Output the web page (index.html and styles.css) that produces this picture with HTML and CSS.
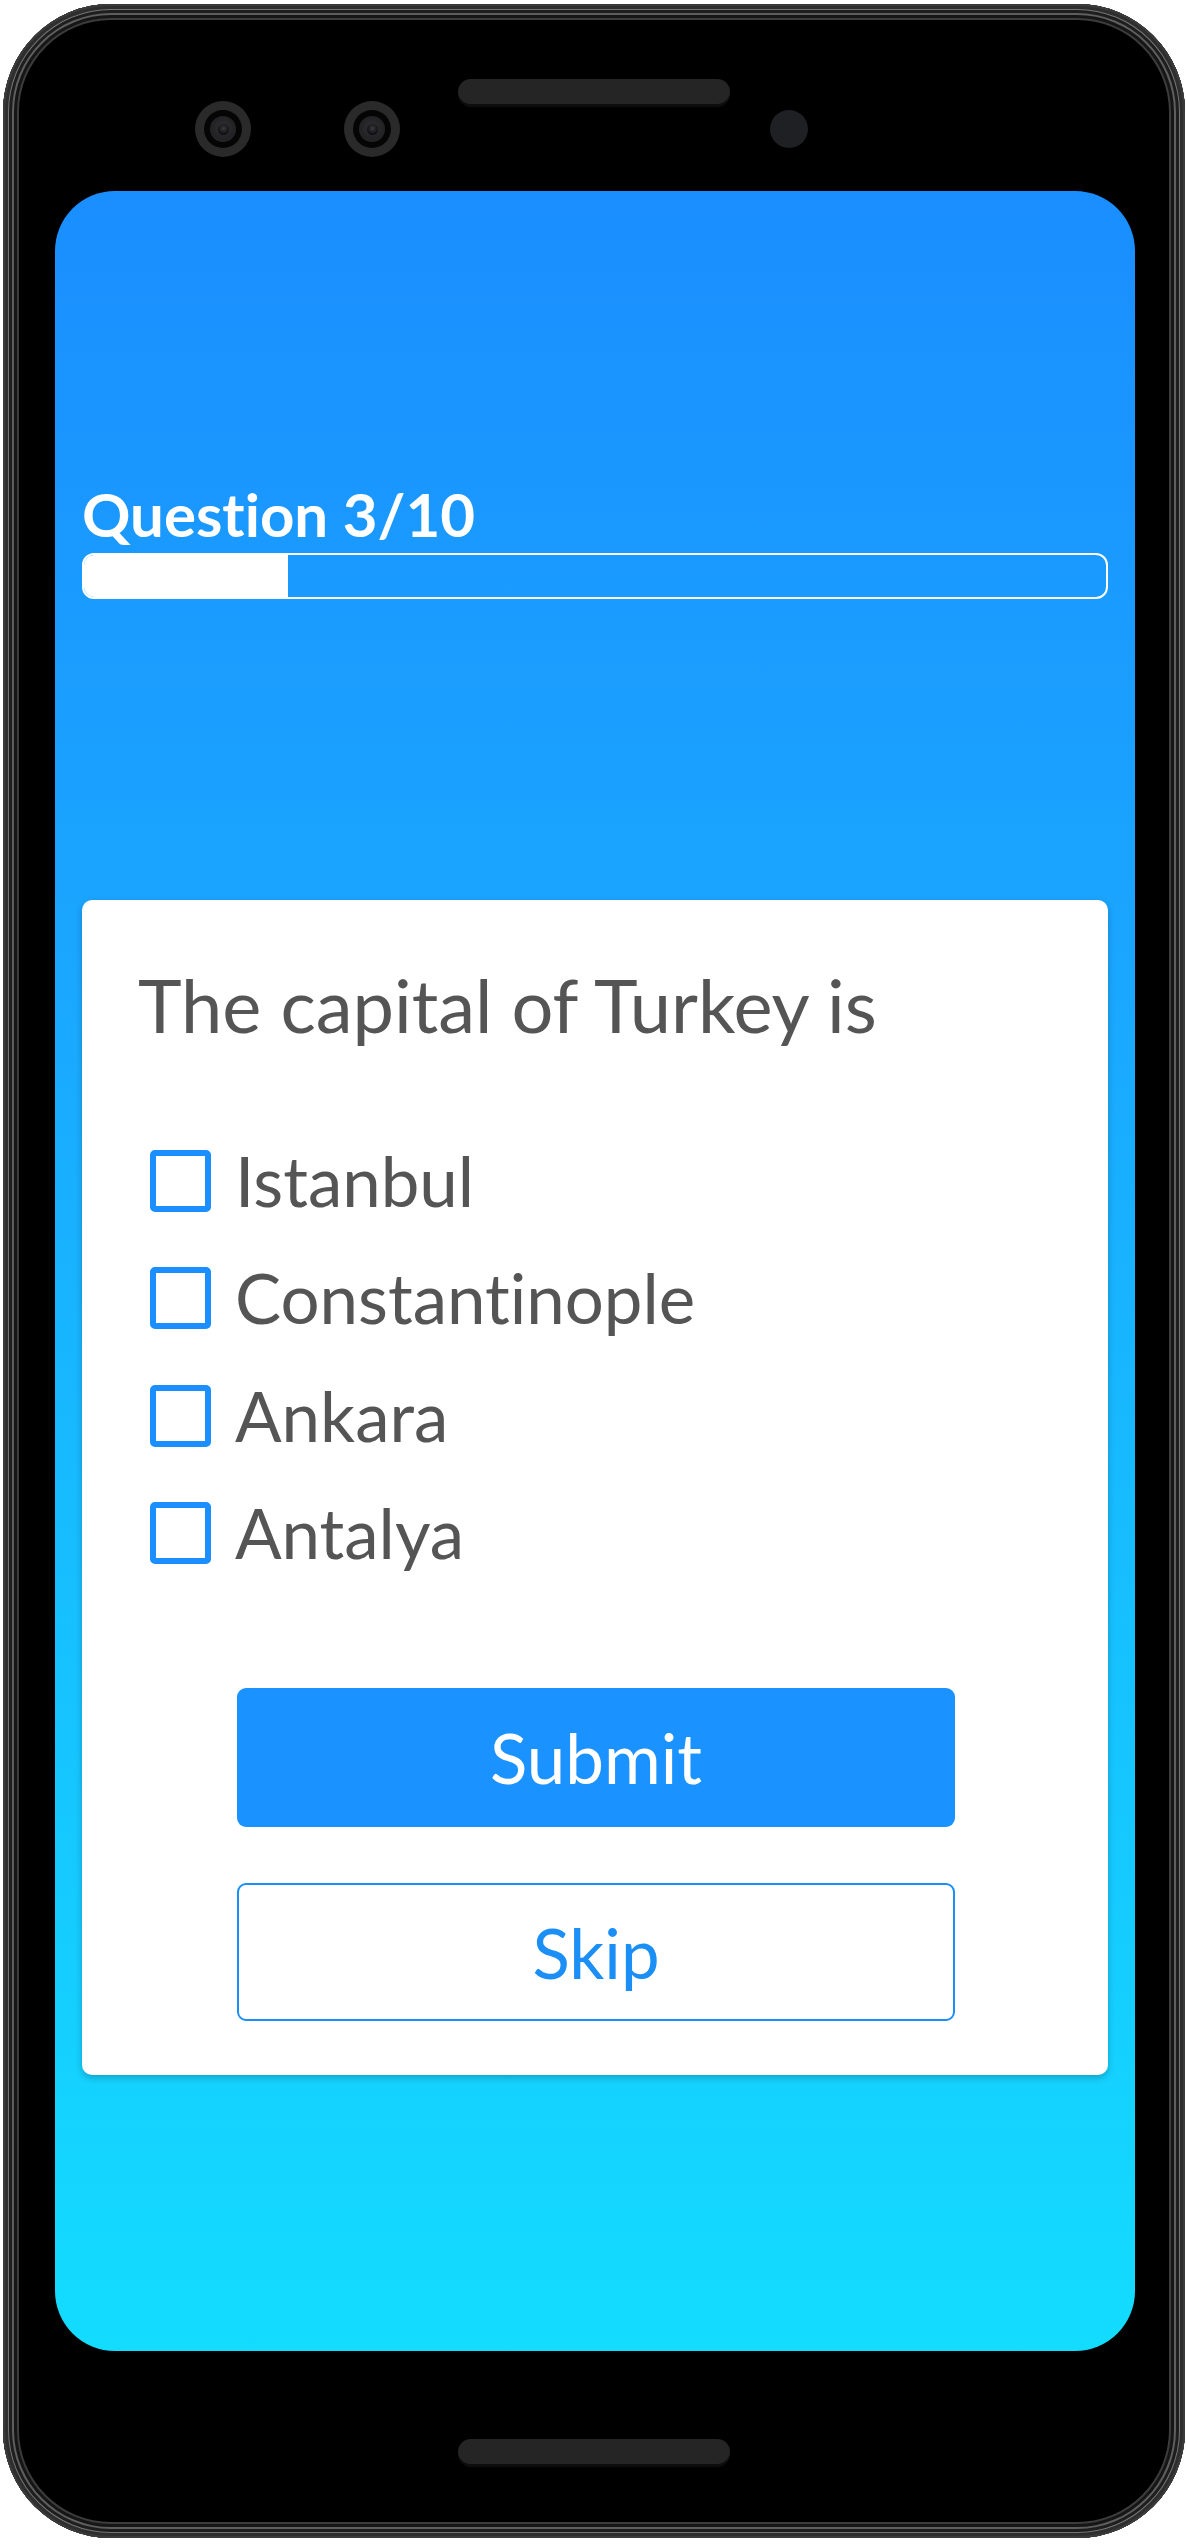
FILE: index.html
```html
<!DOCTYPE html>
<html lang="en">
<head>
<meta charset="utf-8">
<title>Quiz</title>
<link rel="stylesheet" href="styles.css">
</head>
<body>
<div class="phone">
  <div class="top-bezel">
    <div class="camera"><div class="camera-ring"><div class="lens"><div class="pupil"></div></div></div></div>
    <div class="camera camera-2"><div class="camera-ring"><div class="lens"><div class="pupil"></div></div></div></div>
    <div class="speaker speaker-top"></div>
    <div class="sensor"></div>
  </div>
  <div class="screen">
    <div class="progress-title">Question 3/10</div>
    <div class="progress-bar"><div class="progress-fill" style="width: 20%"></div></div>
    <div class="card">
      <div class="question">The capital of Turkey is</div>
      <div class="options">
        <label class="option"><span class="checkbox"></span><span class="option-label">Istanbul</span></label>
        <label class="option"><span class="checkbox"></span><span class="option-label">Constantinople</span></label>
        <label class="option"><span class="checkbox"></span><span class="option-label">Ankara</span></label>
        <label class="option"><span class="checkbox"></span><span class="option-label">Antalya</span></label>
      </div>
      <div class="actions">
        <button class="btn btn-primary">Submit</button>
        <button class="btn btn-outline">Skip</button>
      </div>
    </div>
  </div>
  <div class="bottom-bezel">
    <div class="speaker"></div>
  </div>
</div>
</body>
</html>
```
FILE: styles.css
```css
* { box-sizing: border-box; }
html, body { margin: 0; padding: 0; background: #ffffff; }
body {
  font-family: "Lato", "Liberation Sans", sans-serif;
  font-variant-ligatures: none;
}

.phone {
  margin: 4px 0 0 3px;
  width: 1182px;
  height: 2534px;
  border-radius: 108px;
  background: #000;
  display: flex;
  flex-direction: column;
  box-shadow:
    inset 0 0 0 2px #3a3a3a,
    inset 0 0 0 5px #2e2e2e,
    inset 0 0 0 6px #747474,
    inset 0 0 0 9px #1e1e1e,
    inset 0 0 0 11px #5e5e5e,
    inset 0 0 0 14px #161616,
    inset 0 0 0 16px #3c3c3c;
}

.top-bezel {
  height: 187px;
  display: flex;
  align-items: flex-start;
  padding-left: 192px;
}
.camera {
  width: 56px;
  height: 56px;
  margin-top: 97px;
  border-radius: 50%;
  background: #2a2a2b;
  display: flex;
  align-items: center;
  justify-content: center;
}
.camera-2 { margin-left: 93px; }
.camera-ring {
  width: 38px;
  height: 38px;
  border-radius: 50%;
  background: #050505;
  display: flex;
  align-items: center;
  justify-content: center;
}
.lens {
  width: 26px;
  height: 26px;
  border-radius: 50%;
  background: radial-gradient(circle at 50% 45%, #303033 0%, #222224 60%, #2c2c2e 100%);
  display: flex;
  align-items: center;
  justify-content: center;
}
.pupil {
  width: 11px;
  height: 11px;
  border-radius: 50%;
  background: radial-gradient(circle at 50% 40%, #3a3a3e 0%, #0e0e10 70%);
}
.speaker {
  width: 272px;
  height: 25px;
  border-radius: 13px;
  background: #252525;
  box-shadow: 0 3px 0 #0d0d0d;
}
.speaker-top { margin-top: 75px; margin-left: 58px; }
.sensor {
  width: 38px;
  height: 38px;
  margin-top: 106px;
  margin-left: 40px;
  border-radius: 50%;
  background: #1f2023;
}

.screen {
  margin-left: 52px;
  width: 1080px;
  height: 2160px;
  border-radius: 60px;
  background: linear-gradient(180deg, #1a8eff 0%, #1aa6ff 35%, #13dcff 100%);
  padding: 287px 27px 0 27px;
  display: flex;
  flex-direction: column;
}

.progress-title {
  color: #ffffff;
  font-weight: 700;
  font-size: 60px;
  line-height: 72px;
}
.progress-bar {
  margin-top: 3px;
  height: 46px;
  border: 2px solid #ffffff;
  border-radius: 12px;
  overflow: hidden;
}
.progress-fill {
  height: 100%;
  background: #ffffff;
}

.card {
  margin-top: 301px;
  background: #ffffff;
  border-radius: 10px;
  box-shadow: 0 3px 7px rgba(0, 0, 0, 0.22);
  padding: 60px 0 54px 56px;
}
.question {
  color: #555555;
  font-size: 74px;
  line-height: 89px;
}
.options {
  margin-top: 91px;
  padding-left: 12px;
  display: flex;
  flex-direction: column;
  gap: 35.4px;
}
.option {
  display: flex;
  align-items: center;
  height: 82px;
  gap: 24px;
}
.checkbox {
  width: 61px;
  height: 62px;
  border: 6px solid #1b8fff;
  border-radius: 5px;
  background: #fff;
  flex: none;
}
.option-label {
  color: #555555;
  font-size: 69px;
  line-height: 82px;
}

.actions {
  margin-top: 114px;
  margin-left: 99px;
  width: 718px;
  display: flex;
  flex-direction: column;
  gap: 56px;
}
.btn {
  font-family: "Lato", "Liberation Sans", sans-serif;
  font-variant-ligatures: none;
  font-size: 69px;
  height: 139px;
  border-radius: 9px;
  padding: 0;
  cursor: pointer;
}
.btn-primary {
  background: #1a92ff;
  color: #ffffff;
  border: 0;
}
.btn-outline {
  height: 138px;
  background: #ffffff;
  color: #1b8ff5;
  border: 2px solid #1b8ff5;
}
.bottom-bezel {
  display: flex;
  justify-content: center;
  padding-top: 88px;
}
```
